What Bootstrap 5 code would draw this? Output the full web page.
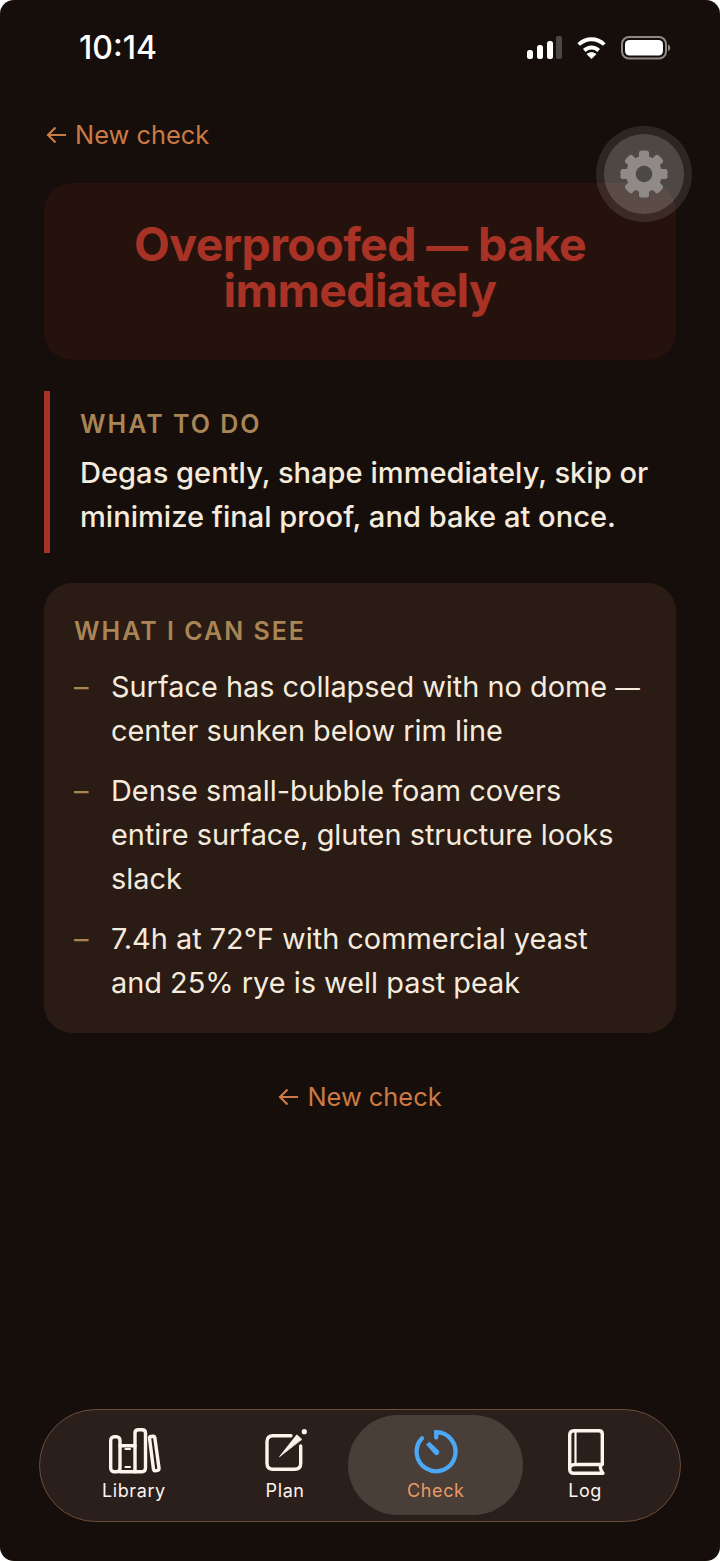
<!DOCTYPE html>
<html lang="en">
<head>
    <meta charset="UTF-8">
    <meta name="viewport" content="width=device-width, initial-scale=1.0">
    <title>Check result</title>
    <link href="https://cdn.jsdelivr.net/npm/bootstrap@5.3.0/dist/css/bootstrap.min.css" rel="stylesheet">
    <style>
        html, body {
            height: 100%;
            background-color: #fff;
        }

        body {
            font-family: Inter, "Liberation Sans", sans-serif;
        }

        .phone {
            position: relative;
            height: 1561px;
            background-color: #160e0a;
            border-radius: 14px;
            overflow: hidden;
            color: #f5ebdd;
        }

        .status-bar {
            height: 95px;
            padding: 28px 48px 0 79px;
        }

        .status-time {
            font-size: 32px;
            line-height: 38px;
            font-weight: 500;
            color: #fff;
            margin-top: 1px;
        }

        .status-icons {
            margin-top: 8px;
            gap: 14px;
        }

        .back-link {
            color: #cb7a45;
            font-size: 25.4px;
            line-height: 32px;
            text-decoration: none;
        }

        .page-body {
            padding: 24px 44px 0;
        }

        .top-back {
            margin-left: 2px;
        }

        .verdict {
            margin-top: 32px;
            height: 177px;
            padding-bottom: 10px;
            background-color: #26120c;
            border-radius: 28px;
            color: #a93226;
            font-size: 46.5px;
            line-height: 46px;
            font-weight: 700;
            letter-spacing: -0.6px;
        }

        .verdict-dash {
            font-size: 0.9em;
            line-height: 1;
        }

        .todo {
            margin-top: 31px;
            height: 162px;
            border-left: 6px solid #a93226;
            padding: 17px 0 0 30px;
        }

        .eyebrow {
            color: #a98556;
            font-size: 25px;
            line-height: 32px;
            font-weight: 600;
            letter-spacing: 2px;
            text-transform: uppercase;
        }

        .todo-text {
            font-size: 29.1px;
            line-height: 44px;
            font-weight: 500;
            margin-top: 11px;
        }

        .seen {
            margin-top: 30px;
            height: 450px;
            background-color: #2a1b14;
            border-radius: 28px;
            padding: 32px 14px 0 30px;
        }

        .seen-list {
            list-style: none;
            margin: 18px 0 0;
            padding: 0;
            font-size: 28.9px;
            line-height: 44px;
        }

        .seen-list li {
            margin-bottom: 16px;
            padding-left: 37px;
            padding-right: 20px;
            position: relative;
        }

        .seen-list li:first-child {
            padding-right: 0;
        }

        .seen-list li::before {
            content: "–";
            position: absolute;
            left: 0;
            color: #a98556;
        }

        .seen-dash {
            font-size: 0.85em;
            line-height: 1;
        }

        .bottom-back {
            margin-top: 48px;
        }

        .gear-btn {
            position: absolute;
            left: 596px;
            top: 126px;
            width: 96px;
            height: 96px;
            border-radius: 50%;
            background-color: rgba(255, 255, 255, 0.1);
        }

        .gear-inner {
            width: 80px;
            height: 80px;
            border-radius: 50%;
            background-color: rgba(255, 255, 255, 0.16);
        }

        .tab-bar {
            position: absolute;
            left: 39px;
            top: 1409px;
            width: 642px;
            height: 113px;
            background-color: #2a1f1b;
            border: 1px solid #6b4d38;
            border-radius: 57px;
            padding: 5px 33px 5px 6px;
        }

        .tab {
            color: #fdf5ec;
            font-size: 18px;
            line-height: 22px;
            font-weight: 400;
            letter-spacing: 0.6px;
            border-radius: 50px;
            text-decoration: none;
            height: 100px;
            padding-top: 13px;
        }

        .tab-library { width: 176px; }
        .tab-plan { width: 127px; }
        .tab-check { width: 175px; background-color: #4a3e39; color: #ec9a62; }
        .tab-log { width: 124px; }

        .tab svg {
            display: block;
            margin-bottom: 5px;
            overflow: visible;
        }
    </style>
</head>
<body>
    <div class="phone">
        <!-- status bar -->
        <div class="status-bar d-flex justify-content-between align-items-start">
            <span class="status-time">10:14</span>
            <div class="d-flex align-items-start status-icons">
                <svg width="35" height="23" viewBox="0 0 35 23">
                    <rect x="0" y="14" width="6" height="9" rx="2.5" fill="#fff"/>
                    <rect x="10" y="9" width="6" height="14" rx="2.5" fill="#fff"/>
                    <rect x="20" y="5" width="6" height="18" rx="2.5" fill="#fff"/>
                    <rect x="29" y="0" width="6" height="23" rx="2" fill="#4a4644"/>
                </svg>
                <svg width="31" height="24" viewBox="0 0 31 24" fill="none">
                    <path d="M2.7 8.5C10 1.5 21 1.5 28.3 8.5M8.3 14.5C12.5 10.5 18.5 10.5 22.7 14.5" stroke="#fff" stroke-width="3.8"/>
                    <path d="M15.5 23L10.5 18C13.5 15.6 17.5 15.6 20.5 18Z" fill="#fff"/>
                </svg>
                <svg width="51" height="24" viewBox="0 0 51 24">
                    <rect x="1" y="1" width="44" height="21.5" rx="7" fill="none" stroke="#8c8987" stroke-width="2"/>
                    <rect x="4" y="4" width="38" height="15.5" rx="4.5" fill="#fff"/>
                    <path d="M47 8.5C50 9.5 50 14 47 15Z" fill="#8c8987"/>
                </svg>
            </div>
        </div>

        <div class="page-body">
            <a href="#" class="back-link top-back d-inline-flex align-items-center gap-2">
                <svg width="21" height="18" viewBox="0 0 21 18" fill="none" stroke="#cb7a45" stroke-width="2.2">
                    <path d="M20 9H2M9.5 1.5L2 9L9.5 16.5"/>
                </svg>
                New check
            </a>

            <div class="verdict d-flex align-items-center justify-content-center text-center">
                <div>Overproofed <span class="verdict-dash">—</span> bake<br>immediately</div>
            </div>

            <div class="todo">
                <div class="eyebrow">What to do</div>
                <div class="todo-text">Degas gently, shape immediately, skip or minimize final proof, and bake at once.</div>
            </div>

            <div class="seen">
                <div class="eyebrow">What I can see</div>
                <ul class="seen-list">
                    <li>Surface has collapsed with no dome <span class="seen-dash">—</span> center sunken below rim line</li>
                    <li>Dense small-bubble foam covers entire surface, gluten structure looks slack</li>
                    <li>7.4h at 72°F with commercial yeast and 25% rye is well past peak</li>
                </ul>
            </div>

            <div class="bottom-back text-center">
                <a href="#" class="back-link d-inline-flex align-items-center gap-2">
                    <svg width="21" height="18" viewBox="0 0 21 18" fill="none" stroke="#cb7a45" stroke-width="2.2">
                        <path d="M20 9H2M9.5 1.5L2 9L9.5 16.5"/>
                    </svg>
                    New check
                </a>
            </div>
        </div>

        <!-- settings -->
        <button type="button" class="gear-btn btn p-0 border-0 d-flex align-items-center justify-content-center" aria-label="Settings">
            <span class="gear-inner d-flex align-items-center justify-content-center">
                <svg width="50" height="50" viewBox="-25 -25 50 50">
                    <g fill="#8f8a87">
                        <circle r="18"/>
                        <rect x="-5" y="-23.5" width="10" height="12" rx="2.5"/>
                        <rect x="-5" y="-23.5" width="10" height="12" rx="2.5" transform="rotate(45)"/>
                        <rect x="-5" y="-23.5" width="10" height="12" rx="2.5" transform="rotate(90)"/>
                        <rect x="-5" y="-23.5" width="10" height="12" rx="2.5" transform="rotate(135)"/>
                        <rect x="-5" y="-23.5" width="10" height="12" rx="2.5" transform="rotate(180)"/>
                        <rect x="-5" y="-23.5" width="10" height="12" rx="2.5" transform="rotate(225)"/>
                        <rect x="-5" y="-23.5" width="10" height="12" rx="2.5" transform="rotate(270)"/>
                        <rect x="-5" y="-23.5" width="10" height="12" rx="2.5" transform="rotate(315)"/>
                    </g>
                    <circle r="8.3" fill="#4c4845"/>
                </svg>
            </span>
        </button>

        <!-- tab bar -->
        <nav class="tab-bar d-flex">
            <a href="#" class="tab tab-library d-flex flex-column align-items-center">
                <svg width="54" height="47" viewBox="1 0 54 47" fill="none" stroke="#fdf5ec" stroke-width="3.4" stroke-linejoin="round" stroke-linecap="round">
                    <rect x="4.7" y="8.7" width="9.3" height="35" rx="3.5"/>
                    <path d="M14 17.7H29M14 43.7H29"/>
                    <path d="M29 43.7V5Q29 1.7 32.5 1.7H36Q39.5 1.7 39.5 5V40Q39.5 43.7 36 43.7H29"/>
                    <path d="M19.5 21H24M19.5 39H24" stroke-width="2.2"/>
                    <path d="M43.5 10Q43.3 8.7 45 8.5L47 8.3Q48.4 8.2 48.8 9.5L53 40Q53.3 42 51.5 42.4L49.5 42.8Q47.8 43 47.5 41.5Z"/>
                </svg>
                Library
            </a>
            <a href="#" class="tab tab-plan d-flex flex-column align-items-center">
                <svg width="54" height="47" viewBox="0 0 54 47" fill="none" stroke="#fdf5ec" stroke-width="3.4" stroke-linecap="round">
                    <path d="M33 7.7H15Q9 7.7 9 13.7V35.3Q9 41.3 15 41.3H36.7Q42.7 41.3 42.7 35.3V18"/>
                    <path d="M21.7 28.5L38.8 6.8L43.6 11.2Z" fill="#fdf5ec" stroke-width="0.8" stroke-linejoin="round"/>
                    <circle cx="46.3" cy="3.7" r="2.6" fill="#fdf5ec" stroke="none"/>
                </svg>
                Plan
            </a>
            <a href="#" class="tab tab-check d-flex flex-column align-items-center">
                <svg width="54" height="47" viewBox="0 0 54 47" fill="none" stroke="#4aa8f5" stroke-width="4.3" stroke-linecap="round">
                    <path d="M27.2 9.5V4.2A19.5 19.5 0 1 1 13 10.2"/>
                    <path d="M17 16.5L20.5 13.7L30 22.8A3 3 0 0 1 26 26.8Z" fill="#4aa8f5" stroke="none"/>
                </svg>
                Check
            </a>
            <a href="#" class="tab tab-log d-flex flex-column align-items-center">
                <svg width="54" height="47" viewBox="0 0 54 47" fill="none" stroke="#fdf5ec" stroke-width="3.4" stroke-linejoin="round">
                    <path d="M11.7 41V7Q11.7 2.7 16 2.7H41Q44.3 2.7 44.3 6V36.5H17Q11.7 36.5 11.7 41Q11.7 45.3 16 45.3H45Q43 43 42.5 40V36.5"/>
                    <path d="M17.5 3V36" stroke-width="2.2"/>
                </svg>
                Log
            </a>
        </nav>
    </div>

    <script src="https://cdn.jsdelivr.net/npm/bootstrap@5.3.0/dist/js/bootstrap.bundle.min.js"></script>
</body>
</html>
